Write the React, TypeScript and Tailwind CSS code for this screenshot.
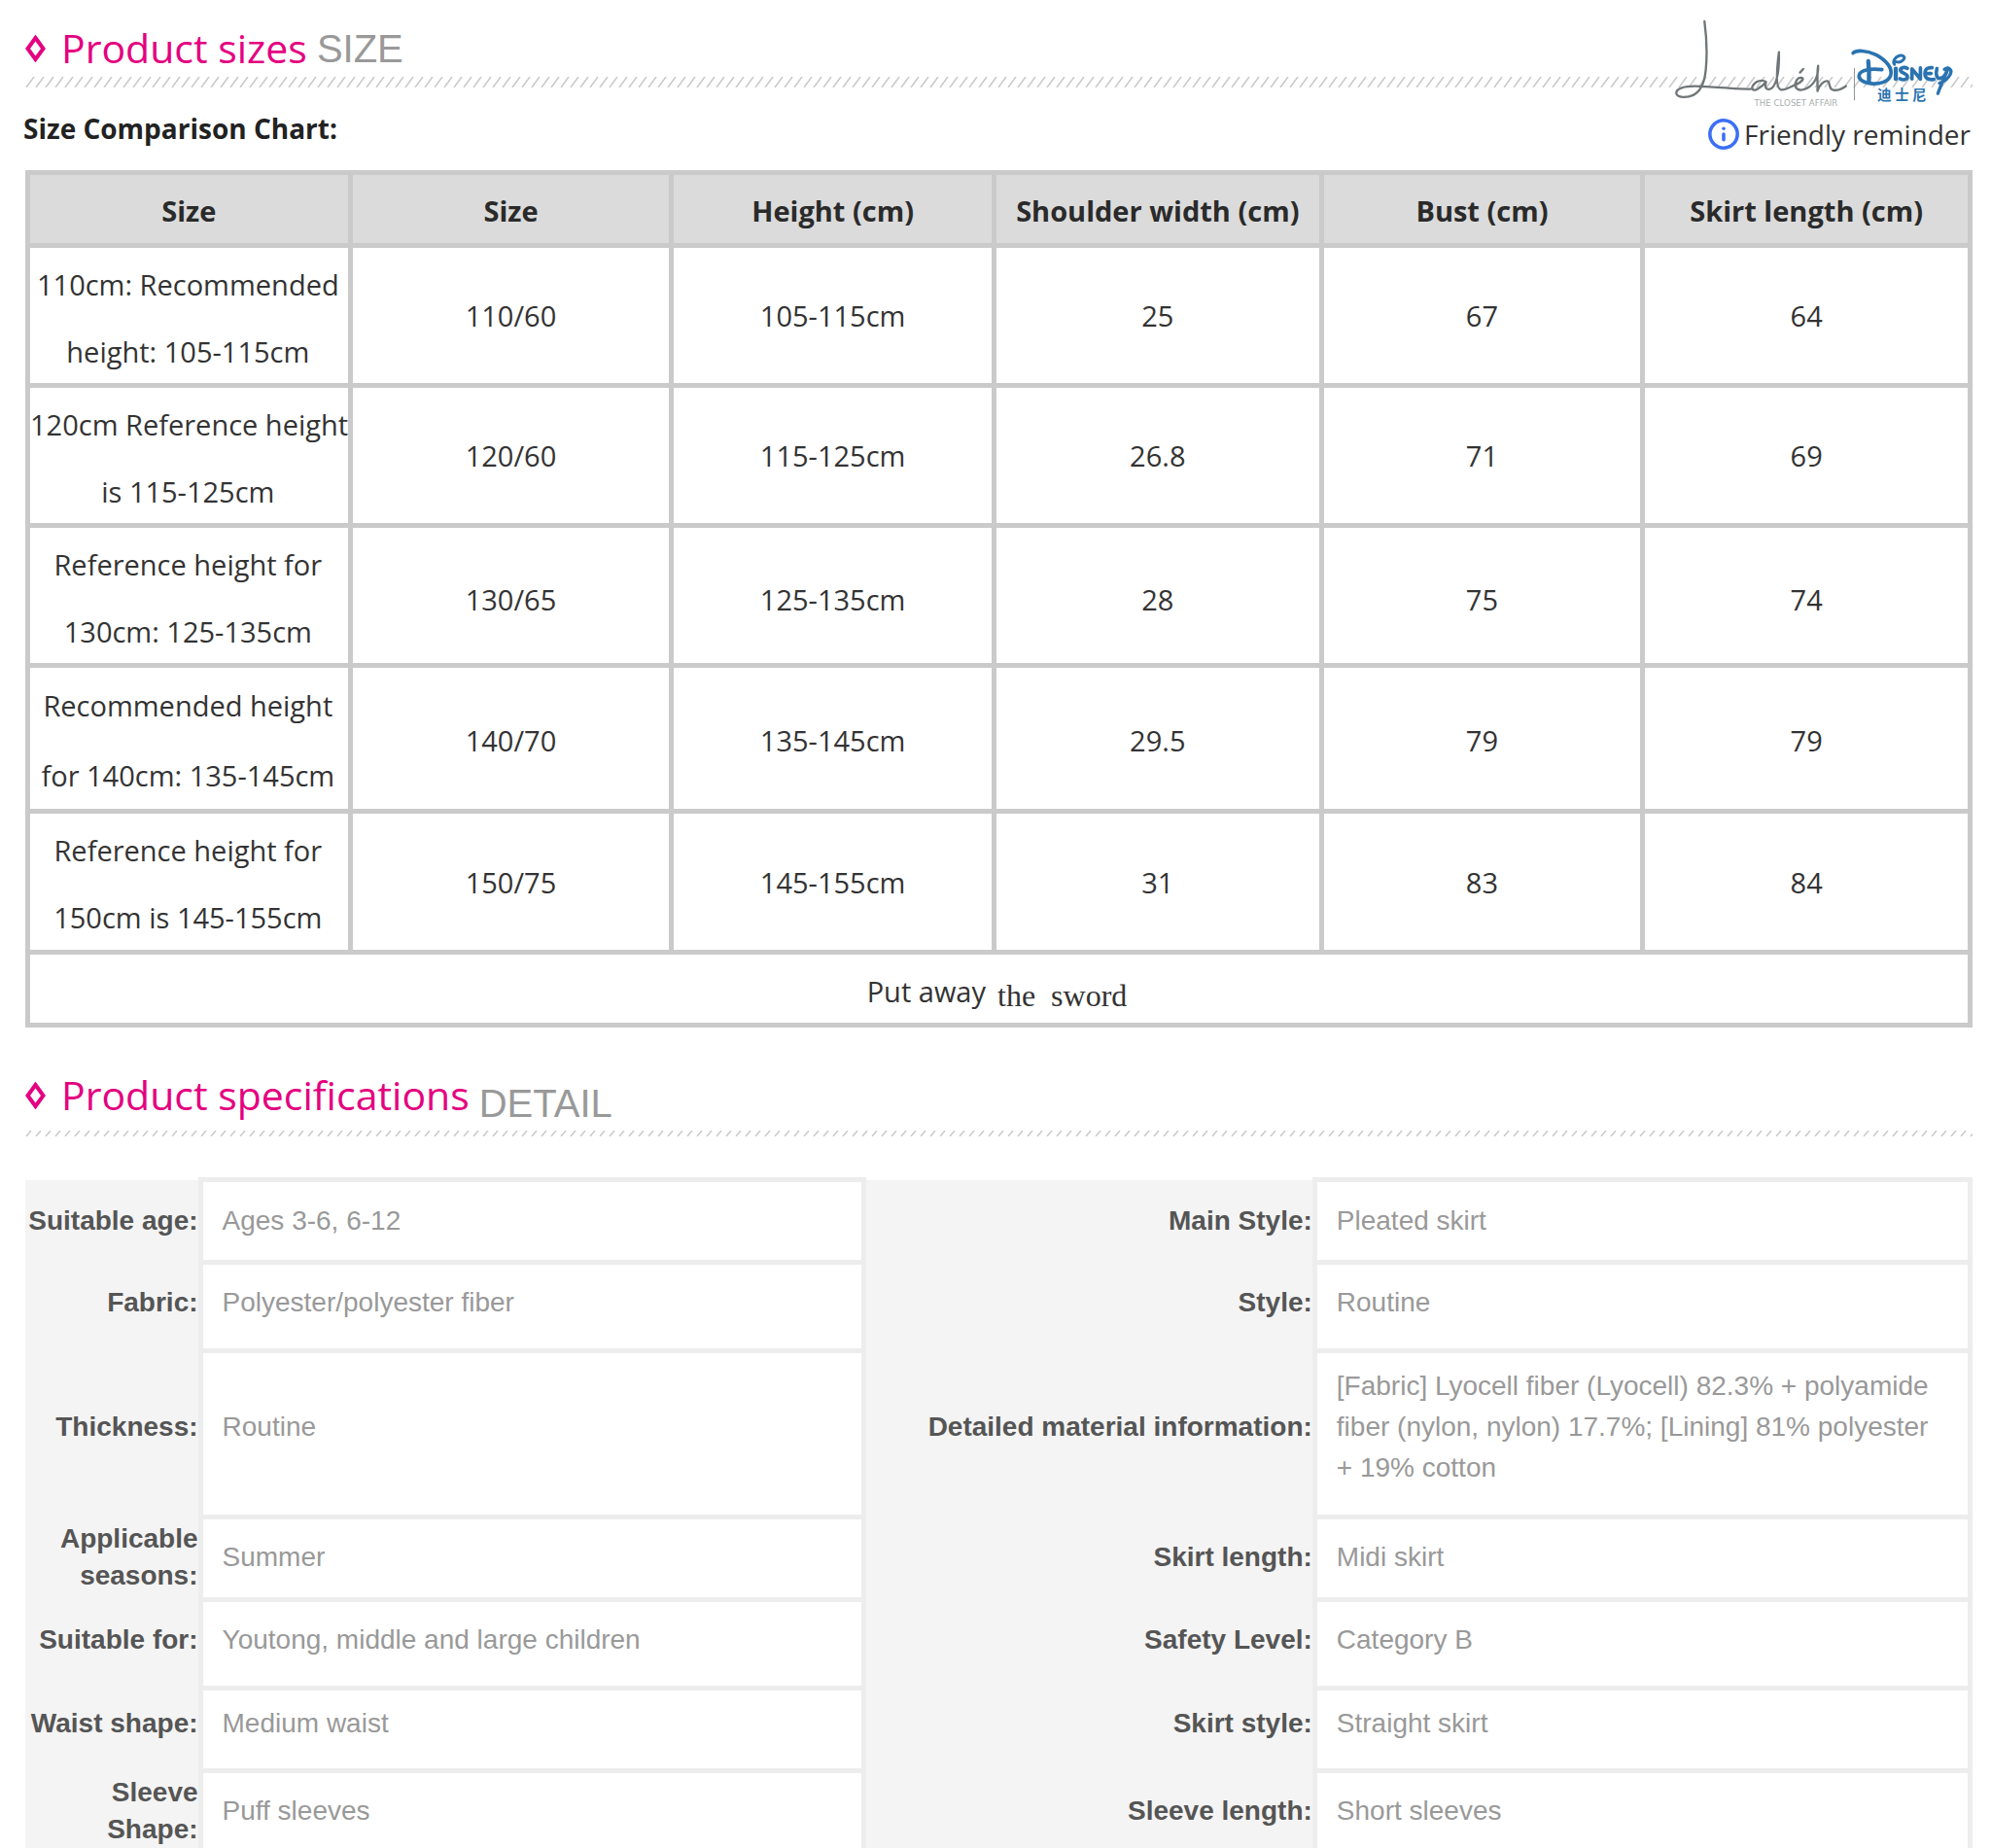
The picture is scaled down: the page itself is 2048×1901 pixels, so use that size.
import type { ReactNode } from "react";
import { Info } from "lucide-react";

const sizeHeaders = [
  "Size",
  "Size",
  "Height (cm)",
  "Shoulder width (cm)",
  "Bust (cm)",
  "Skirt length (cm)",
];

const sizeRows = [
  {
    height: "h-[144px] leading-[69px]",
    label: ["110cm: Recommended", "height: 105-115cm"],
    values: ["110/60", "105-115cm", "25", "67", "64"],
  },
  {
    height: "h-[144px] leading-[69px]",
    label: ["120cm Reference height", "is 115-125cm"],
    values: ["120/60", "115-125cm", "26.8", "71", "69"],
  },
  {
    height: "h-[144px] leading-[69px]",
    label: ["Reference height for", "130cm: 125-135cm"],
    values: ["130/65", "125-135cm", "28", "75", "74"],
    pad: "pt-2",
  },
  {
    height: "h-[150px] leading-[72px]",
    label: ["Recommended height", "for 140cm: 135-145cm"],
    values: ["140/70", "135-145cm", "29.5", "79", "79"],
    pad: "pt-1",
  },
  {
    height: "h-[145px] leading-[69px]",
    label: ["Reference height for", "150cm is 145-155cm"],
    values: ["150/75", "145-155cm", "31", "83", "84"],
  },
];

const specRows = [
  {
    height: "h-[85px]",
    pad: "pb-0",
    items: [
      ["Suitable age:", "Ages 3-6, 6-12"],
      ["Main Style:", "Pleated skirt"],
    ],
  },
  {
    height: "h-[91px]",
    pad: "pb-2",
    items: [
      ["Fabric:", "Polyester/polyester fiber"],
      ["Style:", "Routine"],
    ],
  },
  {
    height: "h-[171px]",
    pad: "pb-3.5",
    items: [
      ["Thickness:", "Routine"],
      [
        "Detailed material information:",
        "[Fabric] Lyocell fiber (Lyocell) 82.3% + polyamide fiber (nylon, nylon) 17.7%; [Lining] 81% polyester + 19% cotton",
      ],
    ],
  },
  {
    height: "h-[85px]",
    pad: "pb-0.5",
    items: [
      ["Applicable seasons:", "Summer"],
      ["Skirt length:", "Midi skirt"],
    ],
  },
  {
    height: "h-[91px]",
    pad: "pb-2",
    items: [
      ["Suitable for:", "Youtong, middle and large children"],
      ["Safety Level:", "Category B"],
    ],
  },
  {
    height: "h-[85px]",
    pad: "pb-3",
    items: [
      ["Waist shape:", "Medium waist"],
      ["Skirt style:", "Straight skirt"],
    ],
  },
  {
    height: "h-[91px]",
    pad: "pb-2",
    items: [
      ["Sleeve Shape:", "Puff sleeves"],
      ["Sleeve length:", "Short sleeves"],
    ],
  },
];

export default function App() {
  return (
    <main className="h-screen overflow-hidden bg-white pl-[26px] pr-[19px] font-['Open_Sans','Noto_Sans',sans-serif] text-[29px] text-[#333]">
      {/* Sizes */}
      <section className="relative">
        <div className="pt-[22px]">
          <SectionTitle title="Product sizes">
            <span className="text-[#999]">SIZE</span>
          </SectionTitle>
        </div>
        <div className="h-[11px]">
          <Hatch id="hatch-size" height={11} slant={8} />
        </div>
        <BrandMark />

        <div className="flex h-[85px] items-start justify-between">
          <h3 className="-ml-0.5 pt-[22px] text-[28px] leading-[40px] font-bold text-[#222]">
            Size Comparison Chart:
          </h3>
          <button
            type="button"
            className="flex items-center gap-1 pt-[28px] pr-0.5 text-[28px] leading-[40px]"
          >
            <Info className="size-[34px] text-[#3b6ff5]" strokeWidth={2.5} />
            Friendly reminder
          </button>
        </div>

        <table className="w-full table-fixed border-collapse text-center">
          <colgroup>
            <col className="w-[16.6%]" />
            <col className="w-[16.55%]" />
            <col className="w-[16.6%]" />
            <col className="w-[16.85%]" />
            <col className="w-[16.55%]" />
            <col className="w-[16.85%]" />
          </colgroup>
          <thead>
            <tr className="h-[75px] bg-[#dbdbdb] text-[#2a2a2a]">
              {sizeHeaders.map((header, i) => (
                <th key={i} className="border-5 border-[#cbcacb] pt-1 font-bold">
                  {header}
                </th>
              ))}
            </tr>
          </thead>
          <tbody>
            {sizeRows.map((row) => (
              <tr key={row.values[0]} className={row.height}>
                <td className="border-5 border-[#cbcacb] pr-0.5 whitespace-nowrap">
                  <div className="-mb-0.5 pt-0.5">
                    {row.label[0]}
                    <br />
                    {row.label[1]}
                  </div>
                </td>
                {row.values.map((value, i) => (
                  <td
                    key={i}
                    className={`border-5 border-[#cbcacb] ${row.pad ?? ""}`}
                  >
                    {value}
                  </td>
                ))}
              </tr>
            ))}
            <tr className="h-[75px]">
              <td colSpan={6} className="border-5 border-[#cbcacb] pr-1">
                <div className="flex justify-center gap-3 pt-2.5 leading-[40px]">
                  <span>Put away</span>
                  <span className="pt-1 font-['Liberation_Serif',serif] text-[32px] whitespace-pre">
                    the  sword
                  </span>
                </div>
              </td>
            </tr>
          </tbody>
        </table>
      </section>

      {/* Specifications */}
      <section className="pt-[42px]">
        <SectionTitle title="Product specifications">
          <span className="pt-2 text-[#999]">DETAIL</span>
        </SectionTitle>
        <div className="h-[55px] pt-[7px]">
          <Hatch id="hatch-detail" height={6} slant={5} />
        </div>

        <table className="w-full table-fixed border-collapse font-['Liberation_Sans',Arial,sans-serif] text-[28px]">
          <colgroup>
            <col className="w-[9%]" />
            <col className="w-[34.1%]" />
            <col className="w-[23.2%]" />
            <col className="w-[33.7%]" />
          </colgroup>
          <tbody>
            {specRows.map((row, i) => (
              <tr key={i} className={row.height}>
                {row.items.map(([label, value]) => (
                  <SpecPair
                    key={label}
                    label={label}
                    value={value}
                    pad={row.pad}
                  />
                ))}
              </tr>
            ))}
          </tbody>
        </table>
      </section>
    </main>
  );
}

function SectionTitle({
  title,
  children,
}: {
  title: string;
  children: ReactNode;
}) {
  return (
    <h2 className="flex h-[57px] items-start leading-[56px]">
      <svg viewBox="0 0 22 28" className="mt-[14px] mr-[15px] h-7 w-[22px]">
        <path
          d="M10.500 3 18.500 14 10.500 25 2.500 14Z"
          fill="none"
          stroke="#e4007f"
          strokeWidth="4"
        />
      </svg>
      <span className="mr-2.5 text-[41px] leading-[54px] text-[#e4007f]">
        {title}
      </span>
      <span className="flex font-['Liberation_Sans',Arial,sans-serif] text-[40px]">
        {children}
      </span>
    </h2>
  );
}

function SpecPair({
  label,
  value,
  pad,
}: {
  label: string;
  value: string;
  pad: string;
}) {
  return (
    <>
      <th
        scope="row"
        className={`border-r-5 border-[#ededed] bg-[#f4f4f4] text-right leading-[38px] font-bold text-[#555] ${pad}`}
      >
        {label}
      </th>
      <td
        className={`border-5 border-[#ededed] px-5 leading-[42px] text-[#999] ${pad}`}
      >
        {value}
      </td>
    </>
  );
}

/* Row of small slanted strokes used as a divider */
function Hatch({
  id,
  height,
  slant,
}: {
  id: string;
  height: number;
  slant: number;
}) {
  return (
    <svg className="block w-full" height={height}>
      <defs>
        <pattern id={id} width="10" height={height} patternUnits="userSpaceOnUse">
          {[-10, 0, 10].map((x) => (
            <path
              key={x}
              d={`M${x + 1} ${height} L${x + 1 + slant} 0`}
              stroke="#c8c8c8"
              strokeWidth="1.5"
            />
          ))}
        </pattern>
      </defs>
      <rect width="100%" height={height} fill={`url(#${id})`} />
    </svg>
  );
}

function BrandMark() {
  return (
    <svg
      viewBox="60 50 880 285"
      className="absolute top-[17px] right-[16px] w-[293px]"
      fill="none"
      strokeLinecap="round"
      strokeLinejoin="round"
    >
      {/* Signature */}
      <g stroke="#6f7677" strokeWidth="7">
        <path d="M160 65C166 110 169 165 164 215C160 255 148 282 125 293C105 302 76 301 73 288C71 273 95 265 130 265C190 266 250 275 303 274" />
        <path d="M350 252C338 243 318 249 309 264C303 276 313 281 324 274C338 266 347 256 350 252C346 266 348 276 360 275C378 272 392 235 390 160C384 205 378 272 396 276C412 278 428 266 442 260C462 252 470 241 459 239C446 238 438 254 441 266C445 279 462 280 478 271C500 258 512 232 511 202C507 228 510 255 509 280C514 262 530 246 541 250C550 256 542 274 558 277C576 280 588 271 597 265" />
        <path d="M455 223 465 212" />
      </g>
      <text
        x="314"
        y="326"
        fill="#a9adad"
        className="font-['DejaVu_Sans',sans-serif] text-[26px]"
      >
        THE CLOSET AFFAIR
      </text>
      <path d="M623 210V308" stroke="#8c9192" strokeWidth="3" />

      {/* Disney */}
      <g stroke="#2a73b0">
        <path
          d="M619 163C628 153 660 154 690 168C722 185 742 210 735 232C728 252 700 260 674 257C650 254 634 243 638 230C642 216 670 210 708 214"
          strokeWidth="11"
        />
        <path d="M666 188C668 208 669 232 668 250" strokeWidth="13" />
        <path
          d="M747 198C740 190 748 175 762 171C776 168 781 176 774 184C768 190 760 192 753 190"
          strokeWidth="9"
        />
        <path d="M751 211V243" strokeWidth="13" />
        <path
          d="M787 210C775 204 763 209 766 218C770 226 787 226 787 236C786 247 771 247 764 242"
          strokeWidth="11"
        />
        <path d="M801 243V212L827 243V209" strokeWidth="11" />
        <path
          d="M863 208C847 207 841 213 841 226C841 239 848 247 869 244M842 226H860"
          strokeWidth="11"
        />
        <path
          d="M878 211C873 230 878 242 888 241C900 239 908 225 911 211"
          strokeWidth="11"
        />
        <path
          d="M901 213C914 204 927 214 919 229C913 242 901 250 886 256M911 213C900 240 889 266 881 288"
          strokeWidth="10"
        />
      </g>
      <text
        x="694"
        y="307"
        fill="#2a73b0"
        className="font-['Noto_Sans_CJK_SC',sans-serif] text-[44px] font-bold"
      >
        迪 士 尼
      </text>
    </svg>
  );
}
